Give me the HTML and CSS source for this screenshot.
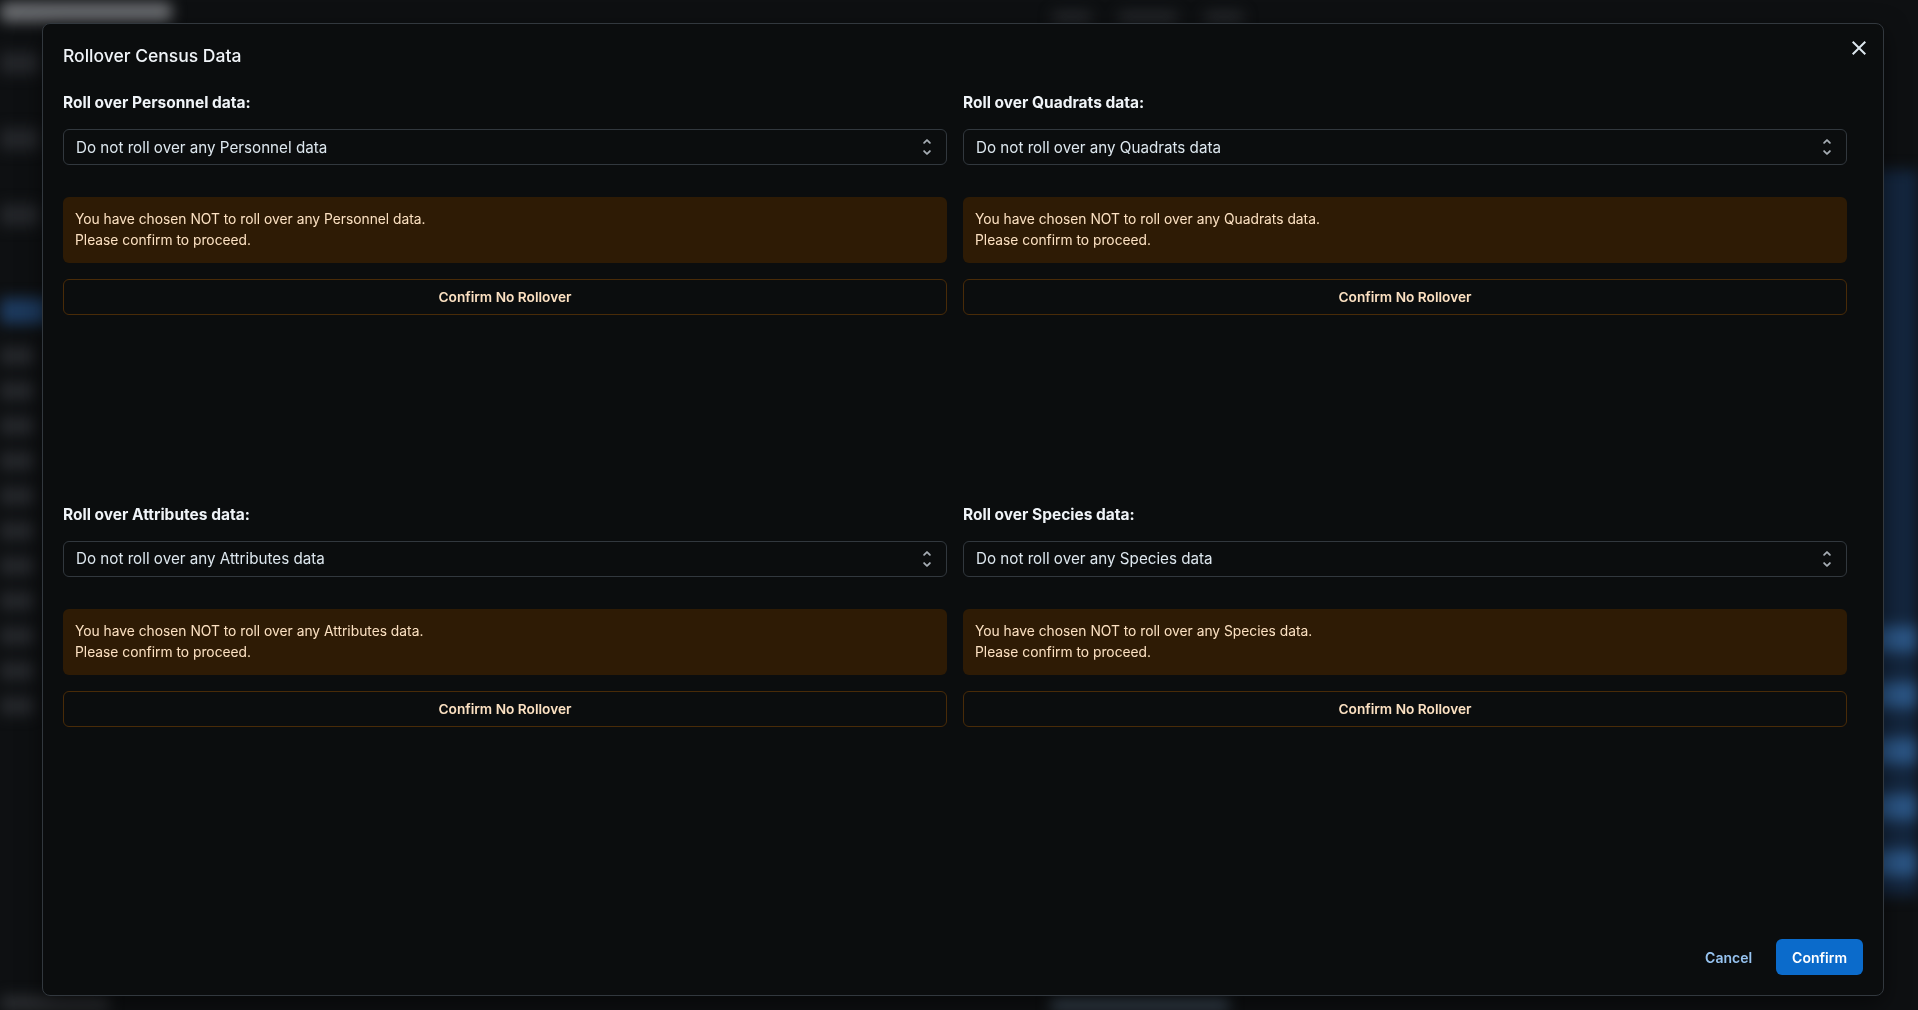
FILE: index.html
```html
<!DOCTYPE html>
<html lang="en">
<head>
<meta charset="utf-8">
<title>Rollover Census Data</title>
<link rel="stylesheet" href="styles.css">
</head>
<body>
<div class="app" aria-hidden="true">
  <header class="app-header">
    <div class="blob blob-title"></div>
    <div class="app-header-center">
      <span class="blob blob-h1"></span>
      <span class="blob blob-h2"></span>
      <span class="blob blob-h3"></span>
    </div>
  </header>
  <div class="app-body">
    <aside class="sidebar">
      <div class="side-group side-group-top">
        <span class="side-item side-big"></span>
        <span class="side-item side-big"></span>
        <span class="side-item side-big"></span>
      </div>
      <div class="side-group">
        <span class="side-item side-active"></span>
        <span class="side-item"></span>
        <span class="side-item"></span>
        <span class="side-item"></span>
        <span class="side-item"></span>
        <span class="side-item"></span>
        <span class="side-item"></span>
        <span class="side-item"></span>
        <span class="side-item"></span>
        <span class="side-item"></span>
        <span class="side-item"></span>
        <span class="side-item"></span>
      </div>
    </aside>
    <main class="app-main"></main>
    <aside class="rightpanel">
      <span class="rp-block"></span>
      <span class="rp-block"></span>
      <span class="rp-block"></span>
      <span class="rp-block"></span>
      <span class="rp-block"></span>
    </aside>
  </div>
  <footer class="app-footer">
    <span class="blob blob-f1"></span>
    <span class="blob blob-f2"></span>
  </footer>
</div>

<div class="modal" role="dialog" aria-labelledby="dlg-title">
  <button class="modal-close" type="button" aria-label="Close">
    <svg viewBox="0 0 24 24" width="24" height="24"><path d="M19 6.41 17.59 5 12 10.59 6.41 5 5 6.41 10.59 12 5 17.59 6.41 19 12 13.41 17.59 19 19 17.59 13.41 12z" fill="currentColor"/></svg>
  </button>
  <h2 class="modal-title" id="dlg-title">Rollover Census Data</h2>

  <div class="modal-body">
    <section class="section">
      <div class="section-label">Roll over Personnel data:</div>
      <div class="select">
        <span class="select-value">Do not roll over any Personnel data</span>
        <svg class="select-indicator" viewBox="0 0 24 24" width="22" height="22"><path d="m12 5.83 2.46 2.46c.39.39 1.02.39 1.41 0 .39-.39.39-1.02 0-1.41L12.7 3.7a.9959.9959 0 0 0-1.41 0L8.12 6.88c-.39.39-.39 1.02 0 1.41.39.39 1.02.39 1.41 0L12 5.83zm0 12.34-2.46-2.46a.9959.9959 0 0 0-1.41 0c-.39.39-.39 1.02 0 1.41l3.17 3.18c.39.39 1.02.39 1.41 0l3.17-3.17c.39-.39.39-1.02 0-1.41a.9959.9959 0 0 0-1.41 0L12 18.17z" fill="currentColor"/></svg>
      </div>
      <div class="alert">You have chosen NOT to roll over any Personnel data.<br>Please confirm to proceed.</div>
      <button class="btn-warning" type="button">Confirm No Rollover</button>
    </section>

    <section class="section">
      <div class="section-label">Roll over Quadrats data:</div>
      <div class="select">
        <span class="select-value">Do not roll over any Quadrats data</span>
        <svg class="select-indicator" viewBox="0 0 24 24" width="22" height="22"><path d="m12 5.83 2.46 2.46c.39.39 1.02.39 1.41 0 .39-.39.39-1.02 0-1.41L12.7 3.7a.9959.9959 0 0 0-1.41 0L8.12 6.88c-.39.39-.39 1.02 0 1.41.39.39 1.02.39 1.41 0L12 5.83zm0 12.34-2.46-2.46a.9959.9959 0 0 0-1.41 0c-.39.39-.39 1.02 0 1.41l3.17 3.18c.39.39 1.02.39 1.41 0l3.17-3.17c.39-.39.39-1.02 0-1.41a.9959.9959 0 0 0-1.41 0L12 18.17z" fill="currentColor"/></svg>
      </div>
      <div class="alert">You have chosen NOT to roll over any Quadrats data.<br>Please confirm to proceed.</div>
      <button class="btn-warning" type="button">Confirm No Rollover</button>
    </section>

    <section class="section">
      <div class="section-label">Roll over Attributes data:</div>
      <div class="select">
        <span class="select-value">Do not roll over any Attributes data</span>
        <svg class="select-indicator" viewBox="0 0 24 24" width="22" height="22"><path d="m12 5.83 2.46 2.46c.39.39 1.02.39 1.41 0 .39-.39.39-1.02 0-1.41L12.7 3.7a.9959.9959 0 0 0-1.41 0L8.12 6.88c-.39.39-.39 1.02 0 1.41.39.39 1.02.39 1.41 0L12 5.83zm0 12.34-2.46-2.46a.9959.9959 0 0 0-1.41 0c-.39.39-.39 1.02 0 1.41l3.17 3.18c.39.39 1.02.39 1.41 0l3.17-3.17c.39-.39.39-1.02 0-1.41a.9959.9959 0 0 0-1.41 0L12 18.17z" fill="currentColor"/></svg>
      </div>
      <div class="alert">You have chosen NOT to roll over any Attributes data.<br>Please confirm to proceed.</div>
      <button class="btn-warning" type="button">Confirm No Rollover</button>
    </section>

    <section class="section">
      <div class="section-label">Roll over Species data:</div>
      <div class="select">
        <span class="select-value">Do not roll over any Species data</span>
        <svg class="select-indicator" viewBox="0 0 24 24" width="22" height="22"><path d="m12 5.83 2.46 2.46c.39.39 1.02.39 1.41 0 .39-.39.39-1.02 0-1.41L12.7 3.7a.9959.9959 0 0 0-1.41 0L8.12 6.88c-.39.39-.39 1.02 0 1.41.39.39 1.02.39 1.41 0L12 5.83zm0 12.34-2.46-2.46a.9959.9959 0 0 0-1.41 0c-.39.39-.39 1.02 0 1.41l3.17 3.18c.39.39 1.02.39 1.41 0l3.17-3.17c.39-.39.39-1.02 0-1.41a.9959.9959 0 0 0-1.41 0L12 18.17z" fill="currentColor"/></svg>
      </div>
      <div class="alert">You have chosen NOT to roll over any Species data.<br>Please confirm to proceed.</div>
      <button class="btn-warning" type="button">Confirm No Rollover</button>
    </section>
  </div>

  <div class="modal-footer">
    <button class="btn-plain" type="button">Cancel</button>
    <button class="btn-solid" type="button">Confirm</button>
  </div>
</div>
</body>
</html>
```

FILE: styles.css
```css
* { box-sizing: border-box; }

html, body {
  margin: 0;
  padding: 0;
  height: 100%;
}

body {
  background: #0e1012;
  font-family: Inter, "Noto Sans", "Liberation Sans", sans-serif;
  overflow: hidden;
}

/* ---------- blurred application behind the backdrop ---------- */
.app {
  height: 100vh;
  display: flex;
  flex-direction: column;
  filter: blur(7px);
}

.app-header {
  height: 34px;
  display: flex;
  align-items: flex-start;
  padding-top: 2px;
}

.blob {
  display: block;
  background: #4a4c50;
  border-radius: 6px;
}

.blob-title {
  width: 172px;
  height: 20px;
  background: #6a6c70;
}

.app-header-center {
  margin-left: 880px;
  display: flex;
  gap: 26px;
  padding-top: 10px;
}

.blob-h1 { width: 40px; height: 10px; background: #2a2c30; }
.blob-h2 { width: 60px; height: 10px; background: #2a2c30; }
.blob-h3 { width: 40px; height: 10px; background: #2a2c30; }

.app-body {
  flex: 1;
  display: flex;
}

.sidebar {
  width: 60px;
  display: flex;
  flex-direction: column;
  padding-top: 18px;
  gap: 72px;
}

.side-group {
  display: flex;
  flex-direction: column;
  gap: 17px;
}

.side-group-top {
  gap: 54px;
}

.side-item {
  display: block;
  width: 34px;
  height: 18px;
  background: #26282c;
  border-radius: 4px;
}

.side-big {
  width: 40px;
  height: 22px;
  background: #24262a;
}

.side-active {
  background: #1d3a5e;
  width: 50px;
  height: 26px;
  margin-bottom: 6px;
}

.app-main { flex: 1; }

.rightpanel {
  width: 60px;
  margin-top: 136px;
  margin-bottom: 90px;
  background: #14263e;
  display: flex;
  flex-direction: column;
  justify-content: flex-end;
  gap: 30px;
  padding-bottom: 20px;
}

.rp-block {
  display: block;
  height: 26px;
  background: #2b5584;
}

.app-footer {
  height: 24px;
  display: flex;
  gap: 940px;
  align-items: flex-end;
}

.blob-f1 { width: 110px; height: 14px; background: #2c2e32; }
.blob-f2 { width: 180px; height: 12px; background: #3c4a58; }

/* ---------- modal dialog ---------- */
.modal {
  position: fixed;
  left: 42px;
  top: 23px;
  width: 1842px;
  height: 973px;
  background: #0b0d0e;
  border: 1px solid #32383e;
  border-radius: 8px;
  padding: 18px 20px 20px 20px;
  display: flex;
  flex-direction: column;
  box-shadow: 0 8px 24px rgba(0, 0, 0, 0.5);
}

.modal-close {
  position: absolute;
  top: 8px;
  right: 8px;
  width: 32px;
  height: 32px;
  padding: 0;
  border: 0;
  border-radius: 6px;
  background: transparent;
  color: #dde7ee;
  display: flex;
  align-items: center;
  justify-content: center;
}

.modal-title {
  margin: 0;
  font-size: 17.5px;
  line-height: 27px;
  font-weight: 500;
  color: #f0f4f8;
}

.modal-body {
  flex: 1;
  margin-top: 23px;
  margin-bottom: 40px;
  padding-right: 16px;
  display: grid;
  grid-template-columns: 1fr 1fr;
  grid-template-rows: 1fr 1fr;
  column-gap: 16px;
  row-gap: 16px;
}

.section {
  display: flex;
  flex-direction: column;
  min-width: 0;
}

.section-label {
  font-size: 15.5px;
  line-height: 21px;
  font-weight: 700;
  color: #f0f4f8;
}

.select {
  margin-top: 16px;
  height: 36px;
  border: 1px solid #32383e;
  border-radius: 6px;
  background: #0b0d0e;
  display: flex;
  align-items: center;
  justify-content: space-between;
  padding: 0 8px 0 12px;
  color: #dde7ee;
  font-size: 15.2px;
}

.select-indicator {
  color: #a7aeb5;
  flex: none;
}

.alert {
  margin-top: 32px;
  background: #2e1b05;
  border-radius: 6px;
  padding: 12px;
  color: #fce1c2;
  font-size: 13.8px;
  line-height: 21px;
}

.btn-warning {
  margin-top: 16px;
  height: 36px;
  border: 1px solid #492b08;
  border-radius: 6px;
  background: transparent;
  color: #fce1c2;
  font-family: inherit;
  font-size: 13.7px;
  font-weight: 600;
}

.modal-footer {
  display: flex;
  justify-content: flex-end;
  gap: 8px;
}

.btn-plain,
.btn-solid {
  height: 36px;
  padding: 0 16px;
  border: 0;
  border-radius: 6px;
  font-family: inherit;
  font-size: 14px;
  font-weight: 600;
}

.btn-plain {
  background: transparent;
  color: #97c3f0;
}

.btn-solid {
  background: #0b6bcb;
  color: #ffffff;
}
```
